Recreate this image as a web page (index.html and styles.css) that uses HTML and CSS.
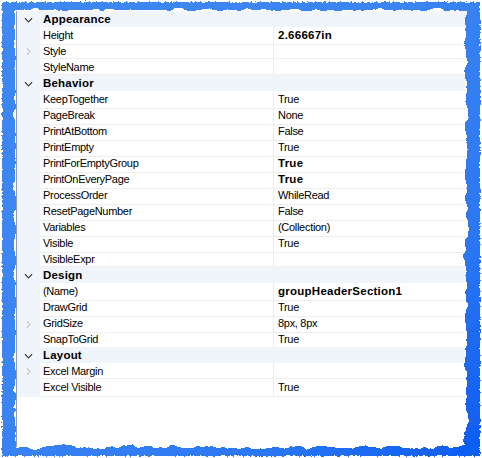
FILE: index.html
```html
<!DOCTYPE html>
<html>
<head>
<meta charset="utf-8">
<link rel="stylesheet" href="styles.css">
</head>
<body>
<div class="frame">
  <svg class="fx" width="0" height="0" aria-hidden="true">
    <defs>
      <filter id="torn" x="-3%" y="-3%" width="106%" height="106%">
        <feTurbulence type="fractalNoise" baseFrequency="0.07" numOctaves="3" seed="7" result="n"/>
        <feDisplacementMap in="SourceGraphic" in2="n" scale="9" xChannelSelector="R" yChannelSelector="G"/>
      </filter>
      <filter id="torn2" x="-3%" y="-3%" width="106%" height="106%">
        <feTurbulence type="fractalNoise" baseFrequency="0.45" numOctaves="2" seed="2" result="n"/>
        <feDisplacementMap in="SourceGraphic" in2="n" scale="4" xChannelSelector="R" yChannelSelector="G"/>
      </filter>
    </defs>
  </svg>
  <div class="edge-blue"></div>
  <div class="edge-paper"></div>

  <div class="grid">
    <div class="row cat"><span class="gut"><svg class="chev-d" viewBox="0 0 10 6"><path d="M1 1 L5 5 L9 1"/></svg></span><span class="name">Appearance</span><span class="val"></span></div>
    <div class="row"><span class="gut"></span><span class="name">Height</span><span class="val b">2.66667in</span></div>
    <div class="row"><span class="gut"><svg class="chev-r" viewBox="0 0 6 10"><path d="M1 1 L5 5 L1 9"/></svg></span><span class="name">Style</span><span class="val"></span></div>
    <div class="row"><span class="gut"></span><span class="name">StyleName</span><span class="val"></span></div>

    <div class="row cat"><span class="gut"><svg class="chev-d" viewBox="0 0 10 6"><path d="M1 1 L5 5 L9 1"/></svg></span><span class="name">Behavior</span><span class="val"></span></div>
    <div class="row"><span class="gut"></span><span class="name">KeepTogether</span><span class="val">True</span></div>
    <div class="row"><span class="gut"></span><span class="name">PageBreak</span><span class="val">None</span></div>
    <div class="row"><span class="gut"></span><span class="name">PrintAtBottom</span><span class="val">False</span></div>
    <div class="row"><span class="gut"></span><span class="name">PrintEmpty</span><span class="val">True</span></div>
    <div class="row"><span class="gut"></span><span class="name">PrintForEmptyGroup</span><span class="val b">True</span></div>
    <div class="row"><span class="gut"></span><span class="name">PrintOnEveryPage</span><span class="val b">True</span></div>
    <div class="row"><span class="gut"></span><span class="name">ProcessOrder</span><span class="val">WhileRead</span></div>
    <div class="row"><span class="gut"></span><span class="name">ResetPageNumber</span><span class="val">False</span></div>
    <div class="row"><span class="gut"></span><span class="name">Variables</span><span class="val">(Collection)</span></div>
    <div class="row"><span class="gut"></span><span class="name">Visible</span><span class="val">True</span></div>
    <div class="row"><span class="gut"></span><span class="name">VisibleExpr</span><span class="val"></span></div>

    <div class="row cat"><span class="gut"><svg class="chev-d" viewBox="0 0 10 6"><path d="M1 1 L5 5 L9 1"/></svg></span><span class="name">Design</span><span class="val"></span></div>
    <div class="row"><span class="gut"></span><span class="name">(Name)</span><span class="val b">groupHeaderSection1</span></div>
    <div class="row"><span class="gut"></span><span class="name">DrawGrid</span><span class="val">True</span></div>
    <div class="row"><span class="gut"><svg class="chev-r" viewBox="0 0 6 10"><path d="M1 1 L5 5 L1 9"/></svg></span><span class="name">GridSize</span><span class="val">8px, 8px</span></div>
    <div class="row"><span class="gut"></span><span class="name">SnapToGrid</span><span class="val">True</span></div>

    <div class="row cat"><span class="gut"><svg class="chev-d" viewBox="0 0 10 6"><path d="M1 1 L5 5 L9 1"/></svg></span><span class="name">Layout</span><span class="val"></span></div>
    <div class="row"><span class="gut"><svg class="chev-r" viewBox="0 0 6 10"><path d="M1 1 L5 5 L1 9"/></svg></span><span class="name">Excel Margin</span><span class="val"></span></div>
    <div class="row"><span class="gut"></span><span class="name">Excel Visible</span><span class="val">True</span></div>
    <div class="filler"></div>
  </div>
</div>
</body>
</html>
```

FILE: styles.css
```css
html, body {
  margin: 0;
  padding: 0;
  background: #ffffff;
  overflow: hidden;
}

.frame {
  position: relative;
  width: 482px;
  height: 458px;
  box-sizing: border-box;
  padding: 11px 16px 11px 16px;
  display: flex;
  font-family: "Liberation Sans", Arial, sans-serif;
  font-size: 11px;
  color: #000;
}

.fx {
  position: absolute;
  width: 0;
  height: 0;
}

.edge-blue {
  position: absolute;
  left: 2px;
  top: 2px;
  right: 2px;
  bottom: 2px;
  background: linear-gradient(135deg, #3f88f2 0%, #3a84f3 45%, #2c78f3 75%, #0d5cf2 100%);
  filter: url(#torn2);
}

.edge-paper {
  position: absolute;
  left: 15px;
  top: 10px;
  right: 16px;
  bottom: 11px;
  background: #ffffff;
  filter: url(#torn);
}

.grid {
  position: relative;
  flex: 1;
  display: flex;
  flex-direction: column;
  border-left: 1px solid #9a9a9a;
  margin-right: 1px;
}

.row {
  display: grid;
  grid-template-columns: 23px 233px 1fr;
  height: 16px;
  line-height: 17px;
}

.gut {
  background: #f0f4fb;
  display: flex;
  align-items: center;
  justify-content: center;
}

.name {
  padding-left: 3px;
  border-bottom: 1px solid #eeeeee;
  letter-spacing: -0.3px;
  white-space: nowrap;
  overflow: hidden;
}

.val {
  padding-left: 4px;
  border-left: 1px solid #ececec;
  border-bottom: 1px solid #eeeeee;
  letter-spacing: -0.3px;
  white-space: nowrap;
}

.val.b {
  font-weight: bold;
  font-size: 11.5px;
  letter-spacing: 0.25px;
}

.row.cat {
  background: #f0f4fb;
}

.row.cat .name {
  font-weight: bold;
  font-size: 11.5px;
  letter-spacing: 0.2px;
  border-bottom: none;
}

.row.cat .val {
  border: none;
}

.chev-d {
  width: 9px;
  height: 6px;
  margin-left: -1px;
  margin-top: 1px;
  fill: none;
  stroke: #3a3a3a;
  stroke-width: 1.3;
}

.chev-r {
  width: 5px;
  height: 9px;
  margin-top: 1px;
  fill: none;
  stroke: #a8a8a8;
  stroke-width: 1.2;
}

.filler {
  flex: 1;
}
```
